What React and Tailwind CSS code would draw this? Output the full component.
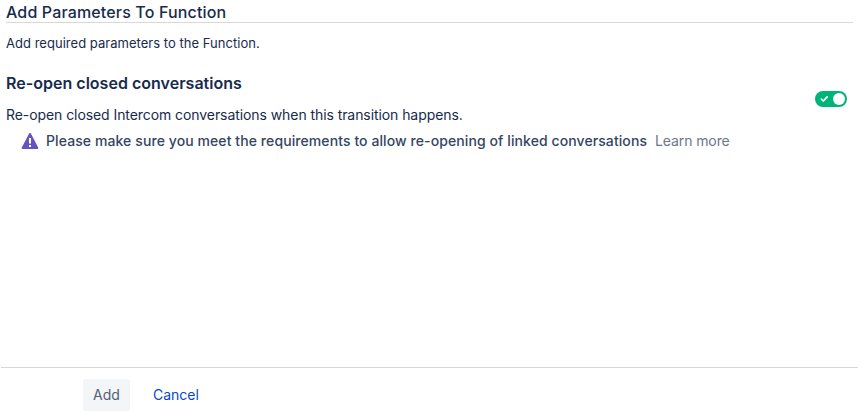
export default function App() {
  return (
    <main className="flex h-[418px] w-[866px] flex-col overflow-hidden bg-white font-['Inter','Liberation_Sans',sans-serif] text-[#172b4d]">
      <header className="ml-[6px] w-[847px]">
        <h1 className="h-[23px] border-b border-[#d8d8d8] pt-[2px] text-[16px] leading-5 font-medium tracking-[0.15px] whitespace-nowrap">
          <span>Add Parameters To Function</span>
        </h1>
        <p className="mt-[10px] text-[13px] leading-5 tracking-[0.03px] whitespace-nowrap">Add required parameters to the Function.</p>
      </header>
      <section className="ml-[6px] flex w-[841px] items-start justify-between pt-[20px]">
        <div>
          <h2 className="text-[16px] leading-5 font-semibold tracking-[0.02px] whitespace-nowrap">Re-open closed conversations</h2>
          <p className="mt-[12px] text-[14px] leading-5 tracking-[-0.075px] whitespace-nowrap">
            Re-open closed Intercom conversations when this transition happens.
          </p>
          <div className="mt-[6px] ml-[15px] flex items-center text-[14px] leading-5 whitespace-nowrap">
            <svg className="mr-[7px] h-[18px] w-[18px]" viewBox="0 0 18 18">
              <path d="M9 2 16.3 16H1.7Z" fill="#6554c0" stroke="#6554c0" strokeWidth="2" strokeLinejoin="round" />
              <path d="M9 6v5.5M9 13v2" stroke="#fff" strokeWidth="2" />
            </svg>
            <span className="w-[601px] font-medium tracking-[0.09px] text-[#344563]">
              Please make sure you meet the requirements to allow re-opening of linked conversations
            </span>
            <a className="ml-2 tracking-[-0.1px] text-[#6b778c]">Learn more</a>
          </div>
        </div>
        <button role="switch" aria-checked="true" aria-label="Re-open closed conversations" className="mt-[18px] flex h-4 w-8 items-center justify-between rounded-full bg-[#00b377] pr-[2px] pl-[5px]">
          <svg className="h-2 w-[9px]" viewBox="0 0 9 8" fill="none">
            <path d="M1.4 4.2 3.3 6 7.2 1.8" stroke="#fff" strokeWidth="1.7" strokeLinecap="round" strokeLinejoin="round" />
          </svg>
          <span className="h-3 w-3 rounded-full bg-white" />
        </button>
      </section>
      <footer className="mt-auto mb-[7px] ml-px flex h-[44px] w-[857px] items-end border-t border-[#d8d8d8] pl-[82px] text-[14px]">
        <button className="h-8 w-[47px] rounded-[3px] bg-[#f4f5f7] pb-[2px] text-[#505f79]">Add</button>
        <button className="ml-[23px] h-8 pb-[2px] text-[#0747d1]">Cancel</button>
      </footer>
    </main>
  );
}
